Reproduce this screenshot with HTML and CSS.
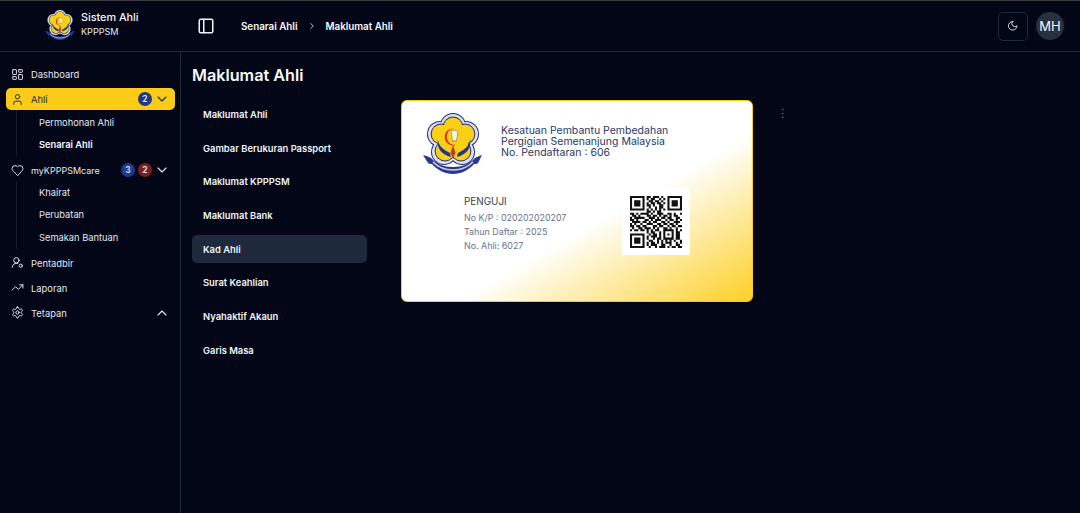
FILE: index.html
```html
<!DOCTYPE html>
<html lang="ms">
<head>
<meta charset="utf-8">
<title>Maklumat Ahli</title>
<link rel="stylesheet" href="styles.css">
</head>
<body>
<svg class="defs" width="0" height="0" aria-hidden="true">
  <symbol id="logo" viewBox="0 0 60 62">
    <path d="M0 43c4 1 6 2 8 3 5 6 13 9 22 9s17-3 22-9c2-1 4-2 7-3l-4 8c-1 1-3 1-4 1-5 6-13 10-21 10S14 58 9 52c-1 0-3 0-4-1z" fill="#2a3690"/>
    <path d="M10 50c5 5 12 8 20 8s15-3 20-8" fill="none" stroke="#c9d0ea" stroke-width="1.600"/>
    <g fill="#1f2d80"><circle cx="30" cy="14" r="13"/><circle cx="17" cy="22" r="13"/><circle cx="43" cy="22" r="13"/><circle cx="21" cy="40" r="13"/><circle cx="39" cy="40" r="13"/><circle cx="30" cy="27" r="17"/></g>
    <g fill="#dfe1ea"><circle cx="30" cy="14" r="12"/><circle cx="17" cy="22" r="12"/><circle cx="43" cy="22" r="12"/><circle cx="21" cy="40" r="12"/><circle cx="39" cy="40" r="12"/><circle cx="30" cy="27" r="17"/></g>
    <g fill="#1f2d80"><circle cx="30" cy="15" r="10.400"/><circle cx="18" cy="22" r="10.400"/><circle cx="42" cy="22" r="10.400"/><circle cx="22" cy="39" r="10.400"/><circle cx="38" cy="39" r="10.400"/><circle cx="30" cy="27" r="16.500"/></g>
    <g fill="#f9d016"><circle cx="30" cy="15" r="9.400"/><circle cx="18" cy="22" r="9.400"/><circle cx="42" cy="22" r="9.400"/><circle cx="22" cy="39" r="9.400"/><circle cx="38" cy="39" r="9.400"/><circle cx="30" cy="27" r="16"/></g>
    <path d="M31 16.500a8.500 8.500 0 1 0 2 16.500 7 7 0 1 1-2-16.500z" fill="#dd2a24"/>
    <path d="M28 19c2-1 5-1 7 0l-1 7-1 4-1.500-2-1.500 2-1-4z" fill="#f7f3df" stroke="#7c7a46" stroke-width=".6"/>
    <path d="M15 27c0 7 6 11 12 14l1 4c-9-2-15-9-13-18zM47 27c0 7-6 11-12 14l-1 4c9-2 15-9 13-18z" fill="#25348c"/>
    <path d="M30 33l2.500 8-2.500 5-2.500-5z" fill="#c9342a"/>
  </symbol>
</svg>

<header class="topbar">
  <div class="brand">
    <svg class="brand-logo"><use href="#logo"/></svg>
    <div class="brand-text">
      <strong>Sistem Ahli</strong>
      <span>KPPPSM</span>
    </div>
  </div>
  <button class="panel-toggle" aria-label="Sidebar">
    <svg viewBox="0 0 24 24" class="icon-lg"><rect x="3" y="3" width="18" height="18" rx="2"/><path d="M9 3v18"/></svg>
  </button>
  <nav class="crumbs">
    <span>Senarai Ahli</span>
    <svg viewBox="0 0 24 24" class="icon-xs"><path d="m9 18 6-6-6-6"/></svg>
    <span>Maklumat Ahli</span>
  </nav>
  <div class="top-actions">
    <button class="theme-btn" aria-label="Tema">
      <svg viewBox="0 0 24 24" class="icon moon"><path d="M12 3a6 6 0 0 0 9 9 9 9 0 1 1-9-9Z"/></svg>
    </button>
    <div class="avatar">MH</div>
  </div>
</header>

<div class="shell">
  <aside class="sidebar">
    <a class="nav-item">
      <svg viewBox="0 0 24 24" class="icon"><rect x="3" y="3" width="7" height="9" rx="1"/><rect x="14" y="3" width="7" height="5" rx="1"/><rect x="14" y="12" width="7" height="9" rx="1"/><rect x="3" y="16" width="7" height="5" rx="1"/></svg>
      <span class="nav-label">Dashboard</span>
    </a>
    <a class="nav-item active">
      <svg viewBox="0 0 24 24" class="icon"><path d="M19 21v-2a4 4 0 0 0-4-4H9a4 4 0 0 0-4 4v2"/><circle cx="12" cy="7" r="4"/></svg>
      <span class="nav-label">Ahli</span>
      <span class="badge blue">2</span>
      <svg viewBox="0 0 24 24" class="icon chev"><path d="m6 9 6 6 6-6"/></svg>
    </a>
    <ul class="subnav">
      <li>Permohonan Ahli</li>
      <li class="current">Senarai Ahli</li>
    </ul>
    <a class="nav-item">
      <svg viewBox="0 0 24 24" class="icon"><path d="M19 14c1.500-1.500 3-3.200 3-5.500A5.500 5.500 0 0 0 16.500 3c-1.800 0-3 .5-4.500 2-1.500-1.500-2.700-2-4.500-2A5.500 5.500 0 0 0 2 8.500c0 2.300 1.500 4 3 5.500l7 7Z"/></svg>
      <span class="nav-label narrow">myKPPPSMcare</span>
      <span class="badge blue">3</span>
      <span class="badge red">2</span>
      <svg viewBox="0 0 24 24" class="icon chev"><path d="m6 9 6 6 6-6"/></svg>
    </a>
    <ul class="subnav tight">
      <li>Khairat</li>
      <li>Perubatan</li>
      <li>Semakan Bantuan</li>
    </ul>
    <a class="nav-item">
      <svg viewBox="0 0 24 24" class="icon"><path d="M2 21a8 8 0 0 1 10.400-7.600"/><circle cx="10" cy="8" r="5"/><circle cx="18" cy="18" r="3"/></svg>
      <span class="nav-label">Pentadbir</span>
    </a>
    <a class="nav-item">
      <svg viewBox="0 0 24 24" class="icon"><path d="M22 7 13.500 15.500l-5-5L2 17"/><path d="M16 7h6v6"/></svg>
      <span class="nav-label">Laporan</span>
    </a>
    <a class="nav-item">
      <svg viewBox="0 0 24 24" class="icon"><path d="M12.220 2h-.44a2 2 0 0 0-2 2v.18a2 2 0 0 1-1 1.730l-.43.25a2 2 0 0 1-2 0l-.15-.08a2 2 0 0 0-2.730.73l-.22.38a2 2 0 0 0 .73 2.730l.15.1a2 2 0 0 1 1 1.720v.51a2 2 0 0 1-1 1.740l-.15.09a2 2 0 0 0-.73 2.730l.22.38a2 2 0 0 0 2.730.73l.15-.08a2 2 0 0 1 2 0l.43.25a2 2 0 0 1 1 1.730V20a2 2 0 0 0 2 2h.44a2 2 0 0 0 2-2v-.18a2 2 0 0 1 1-1.730l.43-.25a2 2 0 0 1 2 0l.15.08a2 2 0 0 0 2.730-.73l.22-.39a2 2 0 0 0-.73-2.730l-.15-.08a2 2 0 0 1-1-1.740v-.5a2 2 0 0 1 1-1.740l.15-.09a2 2 0 0 0 .73-2.730l-.22-.38a2 2 0 0 0-2.730-.73l-.15.08a2 2 0 0 1-2 0l-.43-.25a2 2 0 0 1-1-1.730V4a2 2 0 0 0-2-2z"/><circle cx="12" cy="12" r="3"/></svg>
      <span class="nav-label">Tetapan</span>
      <svg viewBox="0 0 24 24" class="icon chev"><path d="m18 15-6-6-6 6"/></svg>
    </a>
  </aside>

  <main class="content">
    <h1>Maklumat Ahli</h1>
    <div class="detail">
      <ul class="tabs">
        <li>Maklumat Ahli</li>
        <li>Gambar Berukuran Passport</li>
        <li>Maklumat KPPPSM</li>
        <li>Maklumat Bank</li>
        <li class="selected">Kad Ahli</li>
        <li>Surat Keahlian</li>
        <li>Nyahaktif Akaun</li>
        <li>Garis Masa</li>
      </ul>
      <section class="card">
        <div class="card-head">
          <svg class="card-logo"><use href="#logo"/></svg>
          <div class="org">
            <p>Kesatuan Pembantu Pembedahan</p>
            <p>Pergigian Semenanjung Malaysia</p>
            <p>No. Pendaftaran : 606</p>
          </div>
        </div>
        <div class="card-body">
          <div class="member">
            <p class="role">PENGUJI</p>
            <p>No K/P : 020202020207</p>
            <p>Tahun Daftar : 2025</p>
            <p>No. Ahli: 6027</p>
          </div>
          <div class="qr">
            <svg viewBox="0 0 25 25">
              <path class="qr-finder" d="M0 0h7v7H0zM1 1v5h5V1zM2 2h3v3H2zM18 0h7v7h-7zM19 1v5h5V1zM20 2h3v3h-3zM0 18h7v7H0zM1 19v5h5v-5zM2 20h3v3H2z"/>
              <path class="qr-mods" d="M8 .5h2m1 0h3m1 0h1M8 1.500h1m1 0h2m2 0h1m1 0h1M9 2.500h2m1 0h2m1 0h1M8 3.500h1m1 0h2m1 0h2m1 0h1M8 4.500h2m1 0h1m2 0h2M9 5.500h1m2 0h1m1 0h2M8 6.500h1m1 0h1m1 0h1m1 0h1m1 0h1M8 7.500h2m1 0h1m1 0h2M0 8.500h2m1 0h1m1 0h4m1 0h1m2 0h3m2 0h2m1 0h1m2 0h2M1 9.500h2m1 0h1m3 0h2m1 0h2m1 0h1m1 0h2m1 0h1m1 0h2M0 10.500h1m1 0h5m2 0h3m1 0h1m1 0h2m1 0h2m2 0h2M0 11.500h2m1 0h1m3 0h2m1 0h1m1 0h3m2 0h1m1 0h2m1 0h1m1 0h1M1 12.500h4m1 0h2m1 0h1m1 0h2m2 0h2m1 0h1m2 0h3M0 13.500h1m1 0h1m2 0h1m2 0h3m2 0h2m1 0h2m1 0h2m1 0h1M0 14.500h2m1 0h2m1 0h2m3 0h2m1 0h2m2 0h1m1 0h2m1 0h2M1 15.500h1m2 0h2m1 0h3m1 0h1m1 0h1m2 0h2m1 0h1m2 0h1M0 16.500h1m1 0h2m1 0h2m1 0h1m1 0h1m1 0h2m2 0h5m1 0h1m1 0h1M8 17.500h1m1 0h2m2 0h1m1 0h1m3 0h1m1 0h2M9 18.500h1m1 0h2m1 0h1m1 0h1m1 0h1m1 0h1m1 0h2M8 19.500h1m1 0h3m1 0h1m1 0h1m3 0h1m1 0h2M8 20.500h1m2 0h1m1 0h2m1 0h5m1 0h2M9 21.500h2m2 0h1m1 0h1m1 0h1m1 0h1m1 0h1m2 0h1M8 22.500h1m1 0h2m1 0h1m1 0h1m1 0h3m2 0h1m1 0h1M8 23.500h1m1 0h3m2 0h2m2 0h1m2 0h2M9 24.500h1m2 0h1m1 0h3m1 0h1m1 0h2m1 0h2"/>
            </svg>
          </div>
        </div>
      </section>
      <button class="kebab" aria-label="Lagi">
        <svg viewBox="0 0 24 24" class="icon"><circle cx="12" cy="5" r="1"/><circle cx="12" cy="12" r="1"/><circle cx="12" cy="19" r="1"/></svg>
      </button>
    </div>
  </main>
</div>
</body>
</html>
```
FILE: styles.css
```css
* { box-sizing: border-box; }
html, body { height: 100%; }
body {
  margin: 0;
  height: 513px;
  overflow: hidden;
  display: flex;
  flex-direction: column;
  background: #020617;
  color: #f8fafc;
  font-family: Inter, "Noto Sans", "Liberation Sans", sans-serif;
  font-size: 10px;
  border-top: 1px solid #3a3d44;
}
.defs { position: absolute; }
p { margin: 0; }
ul { list-style: none; margin: 0; padding: 0; }
button { background: none; border: 0; padding: 0; color: inherit; display: flex; align-items: center; justify-content: center; }
svg { display: block; }
.icon, .icon-lg, .icon-xs {
  fill: none;
  stroke: currentColor;
  stroke-width: 1.800;
  stroke-linecap: round;
  stroke-linejoin: round;
  flex: none;
}
.icon { width: 13px; height: 13px; }
.icon.moon { width: 11.500px; height: 11.500px; }
.icon-lg { width: 18px; height: 18px; stroke-width: 2; }
.icon-xs { width: 10px; height: 10px; }

.topbar {
  height: 51px;
  flex: none;
  display: flex;
  align-items: center;
  border-bottom: 1px solid #1e293b;
  padding-right: 16px;
}
.brand {
  width: 180px;
  display: flex;
  align-items: center;
  gap: 6px;
  padding: 0 0 3px 45px;
}
.brand-logo { width: 30px; height: 31px; }
.brand-text { display: flex; flex-direction: column; gap: 1px; line-height: 13px; }
.brand-text strong { font-size: 10.800px; font-weight: 500; }
.brand-text span { color: #e2e8f0; font-size: 9.100px; }
.panel-toggle { width: 18px; margin-left: 17px; color: #f1f5f9; }
.crumbs {
  display: flex;
  align-items: center;
  gap: 9px;
  margin-left: 26px;
  font-size: 9.800px;
  font-weight: 600;
}
.top-actions { margin-left: auto; display: flex; align-items: center; gap: 8px; }
.theme-btn { width: 30px; height: 29px; border: 1px solid #1e293b; border-radius: 5px; }
.avatar {
  width: 28px;
  height: 28px;
  border-radius: 50%;
  background: #283040;
  display: flex;
  align-items: center;
  justify-content: center;
  font-size: 13px;
}

.shell { flex: 1; display: flex; min-height: 0; }
.sidebar {
  width: 181px;
  flex: none;
  border-right: 1px solid #1e293b;
  padding: 8px 5px 0 6px;
  display: flex;
  flex-direction: column;
}
.nav-item {
  height: 22px;
  margin-top: 3px;
  flex: none;
  display: flex;
  align-items: center;
  padding: 0 5px 0 4.500px;
  border-radius: 5px;
  color: #e2e8f0;
}
.nav-label { flex: 1; margin-left: 7.500px; padding-top: 1px; font-size: 9.400px; }
.nav-label.narrow { font-size: 9px; }
.nav-item.active { background: #fbcb17; color: #1e293b; }
.icon.chev { margin-left: 2px; width: 16px; height: 16px; stroke-width: 1.700; }
.badge {
  width: 14px;
  height: 14px;
  border-radius: 50%;
  font-size: 8.500px;
  font-weight: 600;
  display: flex;
  align-items: center;
  justify-content: center;
  color: #e2e8f0;
}
.badge + .badge { margin-left: 3px; }
.blue { background: #1e3a8a; }
.red { background: #7f1d1d; }
.subnav {
  margin-left: 10px;
  padding: 1px 0 0 22px;
  border-left: 1px solid #151d2e;
  display: flex;
  flex-direction: column;
  flex: none;
  color: #e2e8f0;
  font-size: 9.300px;
}
.subnav li { height: 22.500px; display: flex; align-items: center; }
.subnav.tight { padding-top: 0; }
.subnav.tight li { height: 22.670px; }
.subnav .current { font-weight: 600; color: #f8fafc; }

.content { flex: 1; min-width: 0; padding: 12px 0 0 11px; }
h1 { margin: 0 0 14px; font-size: 16.200px; line-height: 22px; font-weight: 600; }
.detail { display: flex; align-items: flex-start; }
.tabs { width: 175px; flex: none; display: flex; flex-direction: column; gap: 5.700px; font-size: 9.400px; font-weight: 600; }
.tabs li { height: 28px; padding: 1px 11px 0; display: flex; align-items: center; border-radius: 5px; color: #f1f5f9; }
.tabs .selected { background: #1e293b; }

.card {
  width: 352px;
  height: 202px;
  margin-left: 34px;
  border: 1px solid #facc15;
  border-radius: 6px;
  background: linear-gradient(to bottom right, #fff 0%, #fff 58%, #fdd027 100%);
  display: flex;
  flex-direction: column;
  color: #1e2a5a;
}
.card-head { display: flex; align-items: center; gap: 18px; padding: 9px 0 0 21px; height: 74px; }
.card-logo { width: 60px; height: 62px; flex: none; }
.org { font-size: 10.500px; line-height: 11px; color: #2b3763; padding-bottom: 3px; }
.card-body { display: flex; padding-left: 62px; margin-top: 13px; }
.member { padding-top: 6px; font-size: 8.900px; line-height: 14px; color: #64748b; flex: 1; }
.member .role { font-size: 9.900px; line-height: 15px; color: #334155; margin-bottom: 2px; }
.qr { width: 68px; height: 67px; background: #fff; margin-right: 62px; padding: 8px; }
.qr svg { width: 52px; height: 52px; }
.qr-finder { fill: #111; fill-rule: evenodd; }
.qr-mods { fill: none; stroke: #111; stroke-width: 1; }
.kebab { margin-left: 23px; width: 12px; height: 14px; margin-top: 6px; color: #475569; }
```
